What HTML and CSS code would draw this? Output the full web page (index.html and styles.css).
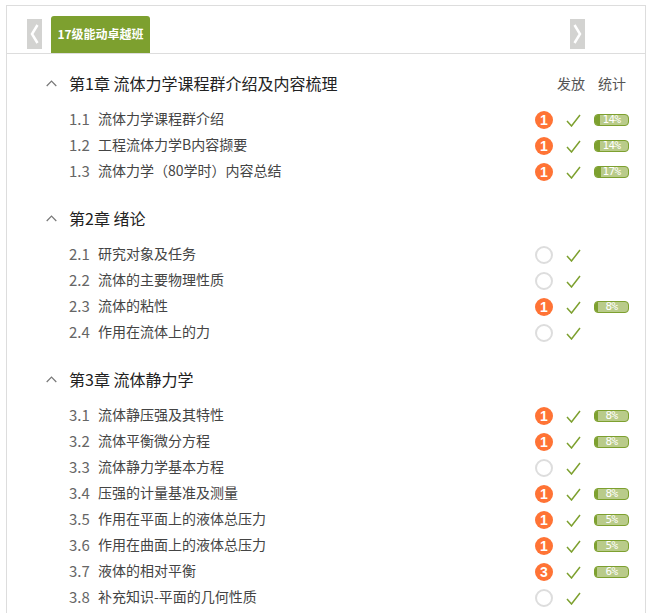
FILE: index.html
```html
<!DOCTYPE html>
<html lang="en">
<head>
    <meta charset="UTF-8">
    <title>Document</title>
    <link rel="stylesheet" href="styles.css">
</head>
<body>
    <svg class="defs" width="0" height="0">
        <symbol id="check" viewBox="0 0 15 13"><path d="M1 7l4.5 5L14 1" fill="none" stroke="#7da02f" stroke-width="1.5"/></symbol>
        <symbol id="up" viewBox="0 0 11 7"><path d="M.7 6L5.5 1l4.8 5" fill="none" stroke="#777" stroke-width="1.2"/></symbol>
    </svg>
    <div class="card">
        <div class="tabs">
            <div class="arrow"><svg width="15" height="30" viewBox="0 0 15 30"><path d="M10.5 6L5 15l5.500 9" fill="none" stroke="#fff" stroke-width="2.500"/></svg></div>
            <div class="tab">17级能动卓越班</div>
            <div class="arrow right"><svg width="15" height="30" viewBox="0 0 15 30"><path d="M4.500 6L10 15l-5.500 9" fill="none" stroke="#fff" stroke-width="2.500"/></svg></div>
        </div>

        <div class="chapter first">
            <svg class="up" width="11" height="7"><use href="#up"/></svg>
            <h2>第1章 流体力学课程群介绍及内容梳理</h2>
            <div class="heads"><span>发放</span><span>统计</span></div>
        </div>
        <ul>
            <li><span class="num">1.1</span><span class="name">流体力学课程群介绍</span><span class="dot on">1</span><svg class="check" width="15" height="13"><use href="#check"/></svg><span class="bar"><i style="width:14%"></i><b>14%</b></span></li>
            <li><span class="num">1.2</span><span class="name">工程流体力学B内容撷要</span><span class="dot on">1</span><svg class="check" width="15" height="13"><use href="#check"/></svg><span class="bar"><i style="width:14%"></i><b>14%</b></span></li>
            <li><span class="num">1.3</span><span class="name">流体力学（80学时）内容总结</span><span class="dot on">1</span><svg class="check" width="15" height="13"><use href="#check"/></svg><span class="bar"><i style="width:17%"></i><b>17%</b></span></li>
        </ul>

        <div class="chapter">
            <svg class="up" width="11" height="7"><use href="#up"/></svg>
            <h2>第2章 绪论</h2>
        </div>
        <ul>
            <li><span class="num">2.1</span><span class="name">研究对象及任务</span><span class="dot"></span><svg class="check" width="15" height="13"><use href="#check"/></svg></li>
            <li><span class="num">2.2</span><span class="name">流体的主要物理性质</span><span class="dot"></span><svg class="check" width="15" height="13"><use href="#check"/></svg></li>
            <li><span class="num">2.3</span><span class="name">流体的粘性</span><span class="dot on">1</span><svg class="check" width="15" height="13"><use href="#check"/></svg><span class="bar"><i style="width:8%"></i><b>8%</b></span></li>
            <li><span class="num">2.4</span><span class="name">作用在流体上的力</span><span class="dot"></span><svg class="check" width="15" height="13"><use href="#check"/></svg></li>
        </ul>

        <div class="chapter">
            <svg class="up" width="11" height="7"><use href="#up"/></svg>
            <h2>第3章 流体静力学</h2>
        </div>
        <ul>
            <li><span class="num">3.1</span><span class="name">流体静压强及其特性</span><span class="dot on">1</span><svg class="check" width="15" height="13"><use href="#check"/></svg><span class="bar"><i style="width:8%"></i><b>8%</b></span></li>
            <li><span class="num">3.2</span><span class="name">流体平衡微分方程</span><span class="dot on">1</span><svg class="check" width="15" height="13"><use href="#check"/></svg><span class="bar"><i style="width:8%"></i><b>8%</b></span></li>
            <li><span class="num">3.3</span><span class="name">流体静力学基本方程</span><span class="dot"></span><svg class="check" width="15" height="13"><use href="#check"/></svg></li>
            <li><span class="num">3.4</span><span class="name">压强的计量基准及测量</span><span class="dot on">1</span><svg class="check" width="15" height="13"><use href="#check"/></svg><span class="bar"><i style="width:8%"></i><b>8%</b></span></li>
            <li><span class="num">3.5</span><span class="name">作用在平面上的液体总压力</span><span class="dot on">1</span><svg class="check" width="15" height="13"><use href="#check"/></svg><span class="bar"><i style="width:5%"></i><b>5%</b></span></li>
            <li><span class="num">3.6</span><span class="name">作用在曲面上的液体总压力</span><span class="dot on">1</span><svg class="check" width="15" height="13"><use href="#check"/></svg><span class="bar"><i style="width:5%"></i><b>5%</b></span></li>
            <li><span class="num">3.7</span><span class="name">液体的相对平衡</span><span class="dot on">3</span><svg class="check" width="15" height="13"><use href="#check"/></svg><span class="bar"><i style="width:6%"></i><b>6%</b></span></li>
            <li><span class="num">3.8</span><span class="name">补充知识-平面的几何性质</span><span class="dot"></span><svg class="check" width="15" height="13"><use href="#check"/></svg></li>
        </ul>
    </div>
</body>
</html>
```
FILE: styles.css
```css
*{
    margin: 0;
    padding: 0;
    box-sizing: border-box;
    font-family: "Noto Sans CJK SC", "Liberation Sans", sans-serif;
}
html,body{
    height: 613px;
    overflow: hidden;
    background: #fff;
}
.defs{
    display: block;
}
.card{
    width: 640px;
    margin: 5px 0 0 6px;
    border: 1px solid #ddd;
    border-bottom: 0;
    height: 608px;
    overflow: hidden;
}
.tabs{
    display: flex;
    align-items: flex-end;
    height: 48px;
    padding-left: 20px;
    border-bottom: 1px solid #ddd;
}
.arrow{
    width: 15px;
    height: 30px;
    margin-bottom: 4px;
    background: #d3d3d1;
}
.arrow svg{
    display: block;
}
.arrow.right{
    margin-left: 420px;
}
.tab{
    width: 99px;
    height: 37px;
    margin-left: 9px;
    background: #7da02f;
    border-radius: 3px 3px 0 0;
    color: #fff;
    font-size: 12px;
    font-weight: 700;
    line-height: 36px;
    text-align: center;
}
.chapter{
    display: flex;
    align-items: center;
    height: 26px;
    margin-top: 22px;
    padding-left: 39px;
}
.first{
    margin-top: 16px;
}
.up{
    flex: none;
}
.chapter h2{
    margin-left: 12px;
    font-size: 16px;
    font-weight: 400;
    color: #222;
    white-space: nowrap;
}
.heads{
    display: flex;
    gap: 13px;
    margin-left: auto;
    margin-right: 19px;
    font-size: 14px;
    color: #555;
}
ul{
    list-style: none;
    margin-top: 9px;
}
li{
    display: flex;
    align-items: center;
    height: 26px;
    padding-left: 62px;
    font-size: 14px;
    color: #444;
}
.num{
    width: 29px;
    font-size: 15px;
    color: #666;
}
.name{
    width: 437px;
    white-space: nowrap;
}
.dot{
    flex: none;
    width: 18px;
    height: 18px;
    margin-top: 4px;
    border: 2px solid #ddd;
    border-radius: 50%;
}
.dot.on{
    border: 0;
    background: #ff7335;
    color: #fff;
    font-family: "Liberation Sans", sans-serif;
    font-size: 14px;
    font-weight: 700;
    line-height: 18px;
    text-align: center;
}
.check{
    flex: none;
    margin: 5px 0 0 13px;
}
.bar{
    position: relative;
    flex: none;
    width: 35px;
    height: 12px;
    margin: 3px 0 0 13px;
    border: 1px solid #7da02f;
    border-radius: 4px;
    background: #b9cb8a;
    overflow: hidden;
}
.bar i{
    display: block;
    height: 100%;
    background: #7da02f;
}
.bar b{
    position: absolute;
    top: 0;
    left: 0;
    width: 100%;
    color: #fff;
    font-family: "DejaVu Sans Mono", monospace;
    font-size: 11px;
    font-weight: 400;
    letter-spacing: -.6px;
    line-height: 10px;
    text-align: center;
}
```
